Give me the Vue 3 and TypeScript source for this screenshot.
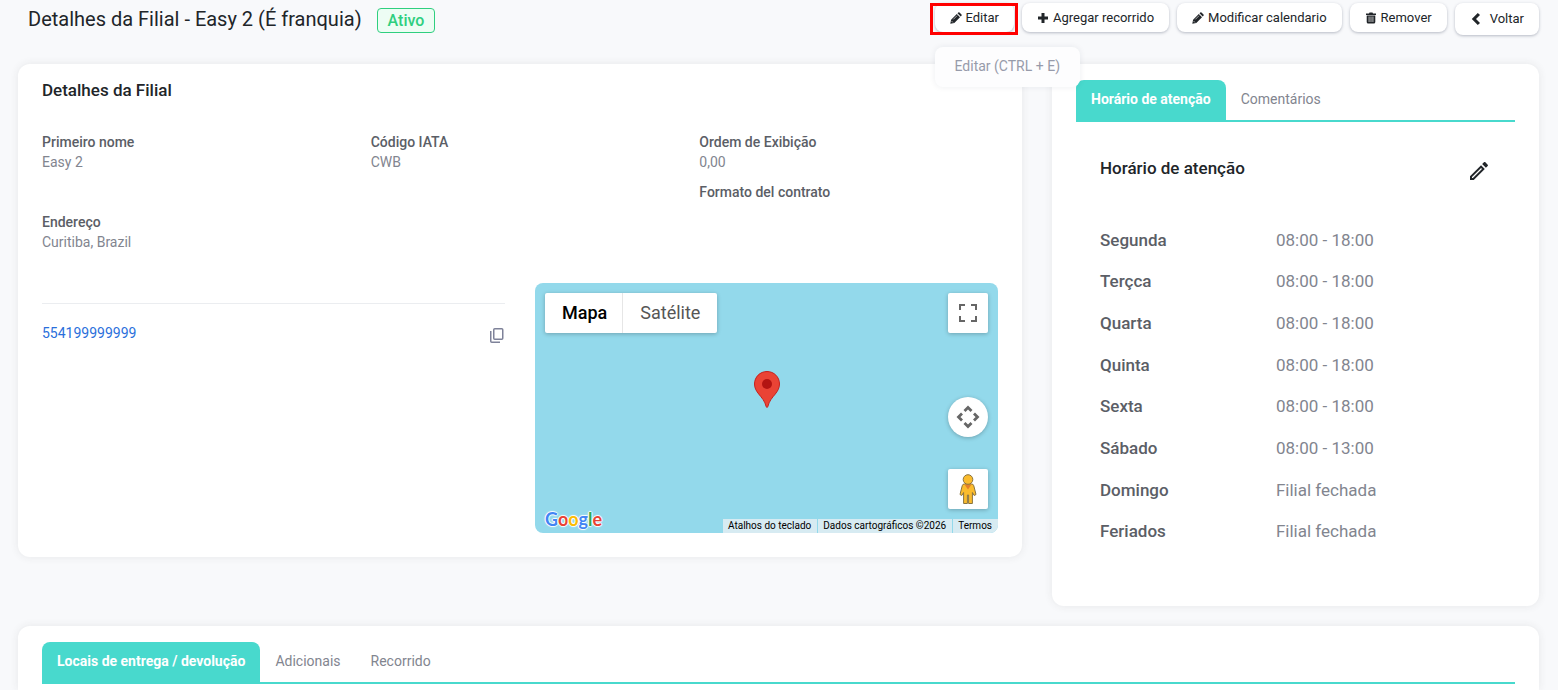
<script setup lang="ts">
import { ref } from 'vue'

interface Hours {
  day: string
  time: string
}

const hours: Hours[] = [
  { day: 'Segunda', time: '08:00 - 18:00' },
  { day: 'Terçca', time: '08:00 - 18:00' },
  { day: 'Quarta', time: '08:00 - 18:00' },
  { day: 'Quinta', time: '08:00 - 18:00' },
  { day: 'Sexta', time: '08:00 - 18:00' },
  { day: 'Sábado', time: '08:00 - 13:00' },
  { day: 'Domingo', time: 'Filial fechada' },
  { day: 'Feriados', time: 'Filial fechada' },
]

const sideTabs = ['Horário de atenção', 'Comentários']
const bottomTabs = ['Locais de entrega / devolução', 'Adicionais', 'Recorrido']
const sideTab = ref(0)
const bottomTab = ref(0)

const logoLetters = [
  { char: 'G', tone: 'blue' },
  { char: 'o', tone: 'red' },
  { char: 'o', tone: 'yellow' },
  { char: 'g', tone: 'blue' },
  { char: 'l', tone: 'green' },
  { char: 'e', tone: 'red' },
]
</script>

<template>
  <div class="page">
    <header class="topbar">
      <h1>Detalhes da Filial - Easy 2 (É franquia)</h1>
      <span class="badge">Ativo</span>
      <div class="actions">
        <div class="edit-wrap">
          <button type="button" class="btn" aria-describedby="edit-tip">
            <svg class="ico" viewBox="0 0 12 12"><path d="M.3 11.700l.8-4L6.800 2l3.200 3.200-5.700 5.700zM7.500 1.300l.8-.8q.6-.5 1.200 0l2 2q.5.6 0 1.200l-.8.800z" /><path class="cut" d="M1.500 9l1.500 1.500M3.300 7.400l3.800-3.800" /></svg>
            Editar
          </button>
          <div id="edit-tip" class="tooltip" role="tooltip">Editar (CTRL + E)</div>
        </div>
        <button type="button" class="btn">
          <svg class="ico" viewBox="0 0 12 12"><path d="M4.500 1h3v3.500H11v3H7.500V11h-3V7.500H1v-3h3.500z" /></svg>
          Agregar recorrido
        </button>
        <button type="button" class="btn">
          <svg class="ico" viewBox="0 0 12 12"><path d="M.3 11.700l.8-4L6.800 2l3.200 3.200-5.700 5.700zM7.500 1.300l.8-.8q.6-.5 1.200 0l2 2q.5.6 0 1.200l-.8.800z" /><path class="cut" d="M1.500 9l1.500 1.500M3.300 7.400l3.800-3.800" /></svg>
          Modificar calendario
        </button>
        <button type="button" class="btn">
          <svg class="ico" viewBox="0 0 12 12"><path fill-rule="evenodd" d="M1 1.500h3L4.500.500h3L8 1.500h3V3H1zM1.700 3.500h8.600V10q0 1.500-1.500 1.500H3.200Q1.700 11.500 1.700 10zM3.700 4.500V10h.7V4.500zm1.950 0V10h.7V4.500zm1.950 0V10h.7V4.500z" /></svg>
          Remover
        </button>
        <button type="button" class="btn back">
          <svg class="ico" viewBox="0 0 12 12"><path d="M7.800 0l2.200 2-4 4 4 4-2.200 2-6-6z" /></svg>
          Voltar
        </button>
      </div>
    </header>

    <main class="content">
      <section class="card details">
        <h2>Detalhes da Filial</h2>
        <dl class="fields">
          <div><dt>Primeiro nome</dt><dd>Easy 2</dd></div>
          <div><dt>Código IATA</dt><dd>CWB</dd></div>
          <div>
            <dt>Ordem de Exibição</dt><dd>0,00</dd>
            <dt class="second">Formato del contrato</dt>
          </div>
          <div><dt>Endereço</dt><dd>Curitiba, Brazil</dd></div>
        </dl>
        <div class="contact-row">
          <div class="contact">
            <a href="tel:554199999999">554199999999</a>
            <button type="button" class="plain" aria-label="Copiar">
              <svg width="16" height="16" viewBox="0 0 16 16" fill="none" stroke="#7e8299" stroke-width="1.500"><rect x="4.750" y="1.750" width="9" height="10.500" rx="1" /><path d="M1.750 4v10.200q0 1 1 1H11" /></svg>
            </button>
          </div>
          <div class="map" aria-label="Mapa">
            <div class="map-top">
              <div class="map-types">
                <button type="button" class="chosen">Mapa</button>
                <button type="button">Satélite</button>
              </div>
              <button type="button" class="map-btn" aria-label="Tela cheia">
                <svg width="18" height="18" viewBox="0 0 18 18" fill="#666"><path d="M0 0v6h2V2h4V0zM16 0h-4v2h4v4h2V0zM16 16h-4v2h6v-6h-2zM2 12H0v6h6v-2H2z" /></svg>
              </button>
            </div>
            <svg class="pin" width="26" height="37" viewBox="0 0 26 37"><path d="M13 .5C6 .5.500 6 .500 13c0 4 1.800 7 4.200 10C7.500 26.500 11 30 12.200 35.800q.8 1.500 1.600 0C15 30 18.500 26.500 21.300 23c2.400-3 4.200-6 4.200-10C25.500 6 20 .5 13 .5z" fill="#ea4335" stroke="#c5221f" /><circle cx="13" cy="13" r="5" fill="#b31412" /></svg>
            <div class="map-side">
              <button type="button" class="map-btn round" aria-label="Controles da câmera do mapa">
                <svg width="24" height="24" viewBox="0 0 24 24" fill="none" stroke="#666" stroke-width="2.800"><path d="M8.500 6L12 2.500 15.500 6M8.500 18l3.500 3.500 3.500-3.500M6 8.500L2.500 12 6 15.500M18 8.500l3.500 3.500-3.500 3.500" /></svg>
              </button>
              <button type="button" class="map-btn" aria-label="Street View">
                <svg width="18" height="30" viewBox="0 0 18 30"><path d="M5.300 10h7.400q1.700 0 2.100 1.800L17 20.500l-1.800 1-1.800-3V29.500H9.600V21H8.400v8.500H4.600v-11l-1.800 3-1.800-1 2.200-8.700Q3.600 10 5.300 10z" fill="#fbbc2d" stroke="#8a7440" /><path d="M5.500 10.500h7L9 15.500z" fill="#e37f2b" /><circle cx="9" cy="5.500" r="4.800" fill="#fbbc2d" stroke="#8a7440" /></svg>
              </button>
            </div>
            <div class="map-foot">
              <a class="logo" href="#" aria-label="Google"><span v-for="(l, i) in logoLetters" :key="i" :class="l.tone">{{ l.char }}</span></a>
              <div class="legal">
                <button type="button">Atalhos do teclado</button>
                <span>Dados cartográficos ©2026</span>
                <a href="#">Termos</a>
              </div>
            </div>
          </div>
        </div>
      </section>

      <section class="card side">
        <nav class="tabs">
          <button v-for="(t, i) in sideTabs" :key="t" type="button" :class="{ active: sideTab === i }" @click="sideTab = i">{{ t }}</button>
        </nav>
        <div class="schedule">
          <div class="schedule-head">
            <h2>Horário de atenção</h2>
            <button type="button" class="plain" aria-label="Editar horário">
              <svg width="24" height="24" viewBox="0 0 24 24" fill="#212529"><path d="M14.060 9.020l.92.920L5.920 19H5v-.92l9.060-9.060M17.660 3c-.25 0-.51.1-.7.290l-1.830 1.830 3.750 3.750 1.830-1.830c.39-.39.39-1.020 0-1.410l-2.340-2.340c-.2-.2-.45-.29-.71-.29zm-3.600 3.190L3 17.250V21h3.750L17.810 9.940l-3.750-3.750z" /></svg>
            </button>
          </div>
          <table>
            <tbody>
              <tr v-for="h in hours" :key="h.day">
                <th scope="row">{{ h.day }}</th>
                <td>{{ h.time }}</td>
              </tr>
            </tbody>
          </table>
        </div>
      </section>
    </main>

    <section class="card bottom">
      <nav class="tabs">
        <button v-for="(t, i) in bottomTabs" :key="t" type="button" :class="{ active: bottomTab === i }" @click="bottomTab = i">{{ t }}</button>
      </nav>
    </section>
  </div>
</template>

<style>
body {
  background: #f8f9fb;
}
</style>

<style scoped>
* {
  box-sizing: border-box;
  margin: 0;
}
.page {
  display: flex;
  flex-direction: column;
  min-height: 100vh;
  padding: 0 19px 0 18px;
  font: 14px/20px Roboto, "Liberation Sans", sans-serif;
  color: #212529;
  background: #f8f9fb;
}
button {
  padding: 0;
  border: 0;
  background: none;
  font: inherit;
  color: inherit;
  cursor: pointer;
}
svg {
  display: block;
  flex: none;
}
a {
  text-decoration: none;
}
.topbar {
  display: flex;
  align-items: flex-start;
  height: 64px;
  padding-left: 10px;
}
h1 {
  padding-top: 7px;
  font-size: 20px;
  line-height: 24px;
  font-weight: 400;
}
.badge {
  margin: 8px 0 0 15px;
  padding: 0 10px;
  border: 1px solid #2fcf7f;
  border-radius: 4px;
  background: #edfdf4;
  color: #2fcf7f;
  font-size: 16px;
  line-height: 23px;
  font-weight: 500;
}
.actions {
  display: flex;
  align-items: flex-start;
  gap: 8px;
  margin: 3px 0 0 auto;
}
.edit-wrap {
  position: relative;
}
.edit-wrap::after {
  content: "";
  position: absolute;
  inset: 0 -4px -3px -5px;
  border: 3px solid #f00;
  pointer-events: none;
}
.btn {
  display: flex;
  align-items: center;
  gap: 4px;
  padding: 0 15px;
  border-radius: 8px;
  background: #fff;
  box-shadow: 0 1px 3px rgba(60, 70, 95, 0.35);
  font-size: 13px;
  line-height: 29px;
  white-space: nowrap;
}
.btn.back {
  gap: 8px;
  line-height: 32px;
}
.ico {
  width: 12px;
  height: 12px;
  fill: #212529;
}
.cut {
  fill: none;
  stroke: #fff;
  stroke-width: 0.6;
}
.tooltip {
  position: absolute;
  top: 44px;
  left: 0;
  z-index: 2;
  padding: 9px 20px 11px;
  border-radius: 8px;
  background: #fdfdfe;
  box-shadow: 0 0 6px rgba(30, 40, 60, 0.08);
  color: #979baa;
  white-space: nowrap;
}
.content {
  display: grid;
  grid-template-columns: 1004fr 487fr;
  align-items: start;
  gap: 30px;
}
.card {
  border-radius: 12px;
  background: #fff;
  box-shadow: 0 0 8px rgba(50, 50, 60, 0.09);
}
.details {
  padding: 14px 24px 24px;
}
h2 {
  font-size: 17px;
  line-height: 24px;
  font-weight: 500;
}
.fields {
  display: grid;
  grid-template-columns: repeat(3, 1fr);
  gap: 10px 30px;
  padding-top: 30px;
}
dt {
  color: #5b5e66;
  font-weight: 500;
}
dd {
  color: #82858f;
}
.second {
  margin-top: 10px;
}
.contact-row {
  display: grid;
  grid-template-columns: 1fr 1fr;
  gap: 30px;
  margin-top: 31px;
}
.contact {
  display: flex;
  align-items: flex-start;
  justify-content: space-between;
  margin-top: 20px;
  padding-top: 19px;
  border-top: 1px solid #ebedf0;
}
.contact a {
  color: #2a6fdb;
}
.contact .plain {
  margin-top: 4px;
}
.map {
  position: relative;
  display: flex;
  flex-direction: column;
  justify-content: space-between;
  height: 250px;
  border-radius: 8px;
  overflow: hidden;
  background: #93d9eb;
}
.map-top {
  display: flex;
  justify-content: space-between;
  padding: 10px 10px 0;
}
.map-types {
  display: flex;
  border-radius: 2px;
  background: #fff;
  box-shadow: 0 1px 4px rgba(0, 0, 0, 0.25);
  font-size: 18px;
  line-height: 40px;
}
.map-types button {
  padding: 0 17px;
  color: #565656;
}
.map-types button + button {
  border-left: 1px solid #e6e6e6;
}
.map-types .chosen {
  padding-right: 15px;
  color: #000;
  font-weight: 500;
}
.map-btn {
  display: grid;
  place-items: center;
  width: 40px;
  height: 40px;
  border-radius: 2px;
  background: #fff;
  box-shadow: 0 1px 4px rgba(0, 0, 0, 0.25);
}
.map-btn.round {
  border-radius: 50%;
}
.pin {
  position: absolute;
  left: calc(50% - 13px);
  top: 88px;
}
.map-side {
  position: absolute;
  right: 10px;
  bottom: 24px;
  display: grid;
  gap: 32px;
}
.map-foot {
  display: flex;
  align-items: flex-end;
  justify-content: space-between;
}
.logo {
  padding: 0 0 3px 10px;
  font: 700 18px/22px Lato, sans-serif;
  text-shadow: 1px 0 1px #fff, -1px 0 1px #fff, 0 1px 1px #fff, 0 -1px 1px #fff;
}
.blue {
  color: #4285f4;
}
.red {
  color: #e94235;
}
.yellow {
  color: #fbbc04;
}
.green {
  color: #34a853;
}
.legal {
  display: flex;
  gap: 1px;
  font-size: 10px;
  line-height: 14px;
  color: #000;
}
.legal > * {
  padding: 0 6px 0 5px;
  background: #d7ebf2;
  color: #000;
}
.side {
  padding: 16px 24px 54px;
}
.tabs {
  display: flex;
  border-bottom: 2px solid #48d9cd;
}
.tabs button {
  padding: 9px 15px 11px;
  border-radius: 8px 8px 0 0;
  color: #82858f;
}
.tabs .active {
  background: #48d9cd;
  color: #fff;
  font-weight: 700;
}
.schedule {
  padding: 34px 24px 0;
}
.schedule-head {
  display: flex;
  align-items: flex-start;
  justify-content: space-between;
}
.schedule-head .plain {
  margin-top: 3px;
}
table {
  width: 100%;
  height: 333px;
  margin-top: 36px;
  border-collapse: collapse;
  font-size: 17px;
  text-align: left;
}
th {
  width: 45%;
  padding: 0;
  color: #5b5e66;
  font-weight: 500;
}
td {
  padding: 0;
  color: #82858f;
}
.bottom {
  flex: 1;
  margin-top: 20px;
  padding: 16px 24px 0;
  border-radius: 12px 12px 0 0;
}
</style>
